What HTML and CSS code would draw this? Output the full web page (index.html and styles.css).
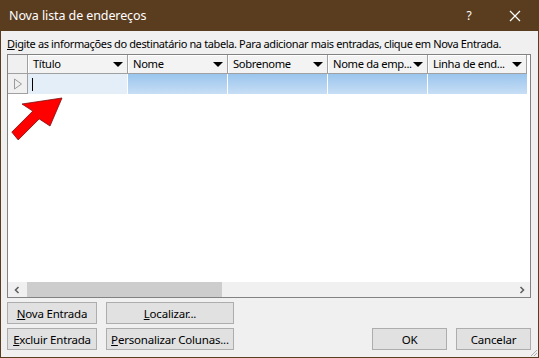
FILE: index.html
```html
<!DOCTYPE html>
<html>
<head>
<meta charset="utf-8">
<link rel="stylesheet" href="styles.css">
</head>
<body>
<div class="window">
  <div class="titlebar">
    <span class="title">Nova lista de endereços</span>
    <span class="help">?</span>
    <span class="close"><svg width="12" height="12" viewBox="0 0 12 12"><path d="M1 1 L11 11 M11 1 L1 11" stroke="#fff" stroke-width="1.2" fill="none"/></svg></span>
  </div>
  <div class="content">
    <div class="instr"><u>D</u>igite as informações do destinatário na tabela. Para adicionar mais entradas, clique em Nova Entrada.</div>
    <div class="grid">
      <div class="hrow">
        <div class="rh"></div>
        <div class="hc"><span>Título</span><i class="dd"></i></div>
        <div class="hc"><span>Nome</span><i class="dd"></i></div>
        <div class="hc"><span>Sobrenome</span><i class="dd"></i></div>
        <div class="hc"><span>Nome da emp...</span><i class="dd"></i></div>
        <div class="hc last"><span>Linha de end...</span><i class="dd"></i></div>
      </div>
      <div class="drow">
        <div class="rh rhd"><svg width="10" height="12" viewBox="0 0 10 12"><path d="M1.5 1 L8.5 6 L1.5 11 Z" fill="none" stroke="#9a9a9a" stroke-width="1"/></svg></div>
        <div class="dc edit"><span class="caret"></span></div>
        <div class="dc sel"></div>
        <div class="dc sel"></div>
        <div class="dc sel"></div>
        <div class="dc sel last"></div>
      </div>
      <div class="empty"></div>
      <div class="hscroll">
        <span class="arr"><svg width="8" height="8" viewBox="0 0 8 8"><path d="M5.5 1 L2.5 4 L5.5 7" fill="none" stroke="#606060" stroke-width="1.6"/></svg></span>
        <div class="track"><div class="thumb"></div></div>
        <span class="arr"><svg width="8" height="8" viewBox="0 0 8 8"><path d="M2.5 1 L5.5 4 L2.5 7" fill="none" stroke="#606060" stroke-width="1.6"/></svg></span>
      </div>
    </div>
    <div class="buttons">
      <div class="btnrow">
        <div class="btn b1"><u>N</u>ova Entrada</div>
        <div class="btn b2"><u>L</u>ocalizar...</div>
      </div>
      <div class="btnrow">
        <div class="btn b1"><u>E</u>xcluir Entrada</div>
        <div class="btn b2"><u>P</u>ersonalizar Colunas...</div>
        <div class="spacer"></div>
        <div class="btn b3">OK</div>
        <div class="btn b3 cancel">Cancelar</div>
      </div>
    </div>
  </div>
  <svg class="arrow" width="70" height="50" viewBox="0 0 70 50"><polygon points="61,8 21,14 31.8,21.1 10.8,42.1 17.2,49.9 38.2,28.9 49,36" fill="#ff0000" stroke="#7a1010" stroke-width="0.8"/></svg>
  <svg class="grip" width="10" height="10" viewBox="0 0 10 10"><path d="M9 3 L3 9 M9 6 L6 9" stroke="#b0b0b0" stroke-width="1"/></svg>
</div>
</body>
</html>
```
FILE: styles.css
```css
* { box-sizing: border-box; }
html, body { margin: 0; padding: 0; }
body { width: 539px; height: 358px; overflow: hidden; font-family: "Noto Sans", "Open Sans", sans-serif; font-size: 12px; color: #000; }
.window { position: relative; width: 539px; height: 358px; background: #f0f0f0; border: 1px solid #5a3c1f; border-top: none; display: flex; flex-direction: column; }
.titlebar { height: 31px; background: #5a3c1f; margin: 0 -1px; display: flex; align-items: center; color: #fff; padding-left: 9px; }
.title { flex: 1; font-size: 12.5px; padding-bottom: 1px; letter-spacing: -0.1px; }
.help { width: 20px; text-align: center; margin-right: 26px; font-size: 12px; }
.close { width: 20px; display: flex; justify-content: center; margin-right: 14px; }
.content { flex: 1; display: flex; flex-direction: column; padding: 5px 6px 0 6px; }
.instr { height: 18px; line-height: 16px; font-size: 11px; letter-spacing: -0.37px; white-space: nowrap; }
.grid { height: 244px; width: 524px; border: 1px solid #828282; background: #fff; display: flex; flex-direction: column; }
.hrow { display: flex; height: 19px; }
.rh { width: 20px; height: 100%; background: #f0f0f0; border-right: 1px solid #a0a0a0; border-bottom: 1px solid #a0a0a0; }
.hc { width: 100px; height: 100%; background: #f3f3f3; border-right: 1px solid #a0a0a0; border-bottom: 1px solid #a0a0a0; box-shadow: inset 1px 1px 0 #fff; display: flex; align-items: center; padding-left: 5px; padding-right: 4px; font-size: 11.2px; letter-spacing: -0.35px; }
.hc.last { width: 99px; }
.hc span { flex: 1; white-space: nowrap; line-height: 16px; }
.dd { width: 0; height: 0; border-left: 5px solid transparent; border-right: 5px solid transparent; border-top: 5px solid #000; flex-shrink: 0; margin-left: 1px; }
.drow { display: flex; height: 20px; }
.rhd { display: flex; align-items: center; justify-content: center; padding-left: 1px; }
.dc { width: 100px; height: 100%; border-right: 1px solid #fff; }
.dc.last { width: 99px; border-right: none; }
.edit { background: #e3eef9; padding-left: 4px; display: flex; align-items: center; }
.caret { width: 1px; height: 13px; background: #000; }
.sel { background: linear-gradient(#9ac5ed, #c7def5); }
.empty { flex: 1; }
.hscroll { height: 15px; background: #f0f0f0; display: flex; align-items: center; }
.arr { width: 17px; display: flex; justify-content: center; align-items: center; height: 100%; }
.track { flex: 1; height: 100%; }
.thumb { width: 195px; height: 100%; background: #cdcdcd; margin-left: 2px; }
.buttons { display: flex; flex-direction: column; gap: 4px; margin-top: 4px; }
.btnrow { display: flex; gap: 9px; }
.btn { height: 22px; background: #e1e1e1; border: 1px solid #adadad; display: flex; align-items: center; justify-content: center; font-size: 11.5px; letter-spacing: -0.2px; white-space: nowrap; }
.b1 { width: 90px; }
.b2 { width: 128px; }
.b3 { width: 75px; }
.spacer { flex: 1; }
.cancel { margin-right: 1px; }
.arrow { position: absolute; left: 0; top: 90px; }
.grip { position: absolute; right: 0; bottom: 0; }
```
